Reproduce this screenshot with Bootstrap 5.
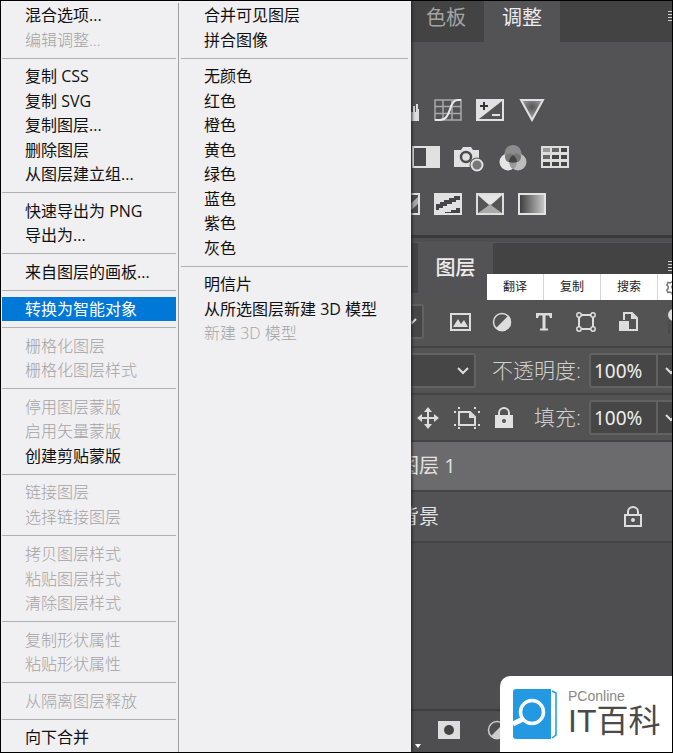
<!DOCTYPE html>
<html lang="zh-CN">
<head>
<meta charset="utf-8">
<meta name="viewport" content="width=device-width, initial-scale=1">
<title>图层</title>
<link href="https://cdn.jsdelivr.net/npm/bootstrap@5.3.0/dist/css/bootstrap.min.css" rel="stylesheet">
<style>
body{font-family:"Open Sans","Noto Sans CJK SC",sans-serif;background:#4e4e50;color:#e2e2e2}
.frame{min-height:100vh;border:1px solid #000}
svg{display:block;flex:none}
/* context menu */
.ctx{top:0;left:0;bottom:0;width:410px;background:#f0eff1;box-shadow:1px 0 3px #222;padding-top:2px}
.ctx-a{width:178px;border-right:1px solid #a0a0a2;padding:0 2px 0 1px}
.ctx-b{padding:0 3px 0 2px}
.ctx button{display:block;width:100%;height:24px;line-height:24px;padding:0 0 0 23px;border:0;background:none;color:#111;font-size:16px;text-align:left;white-space:nowrap}
.ctx button:nth-of-type(even){height:25px}
.ctx button:disabled{color:#a3a3a5;font-weight:300}
.ctx button.chosen{background:#0078d7;color:#fff}
.ctx hr{margin:6px 0 5px;border-top:1px solid #b0b0b2;opacity:1}
.ctx hr:nth-of-type(4n){margin-bottom:6px}
/* panels */
.tabs{background:#434343;padding-left:395px}
.tabs button{border:0;background:none;color:#a3a3a3;font-size:20px;line-height:24px}
.tabs button.on{background:#535355;color:#ececec}
.tabs-top{height:41px}
.tabs-top button{width:88px;padding:0 0 8px 12px}
.tabs-top button.on{width:76px;padding-left:0}
.tabs-mid{height:51px;padding-left:417px;border-top:1px solid #565658}
.tabs-mid button.on{width:75px;font-weight:500}
.adjust{background:#535355;height:196px;padding-top:56px;border-bottom:3px solid #3a3a3c}
.adj-row{height:24px;margin-bottom:23px;padding-left:389px;gap:14px}
.adj-row.shift{padding-left:411px}
.bar{background:#535353;border-bottom:2px solid #444;padding-left:395px;height:47px}
.bar-filter{height:55px;padding-top:4px}
.icons{gap:18px}
.icons-lock{margin-left:20px;gap:14px}
.combo{background:#464646;border:2px solid #626262;border-radius:3px;height:35px;color:#eee}
.opt{font-size:21px;color:#d0d0d0;font-weight:300}
.num{width:69px;font-family:"Noto Sans",sans-serif;font-size:19px;padding:0 0 0 3px;border-radius:3px 0 0 3px}
.drop{width:32px;margin-left:-2px;margin-right:-16px;padding:0 0 0 6px;border-radius:0}
.layer{height:51px;padding:0 29px 0 398px;font-size:20px;background:#535355;border-bottom:2px solid #444}
.layer.sel{height:50px;background:#6b6b6d}
.foot{height:43px;border-top:2px solid #3e3e40;padding:0 0 4px 436px;background:#4e4e50}
.foot-caret{left:413px;bottom:3px}
/* selection toolbar */
.pop{top:273px;left:486px;right:0;height:26px;background:#fff}
.pop button{width:57px;flex:none;border:0;border-right:1px solid #d5d5d5;background:#fff;color:#222;font-size:12px;padding:0}
/* site mark */
.mark-box{right:0;bottom:0;width:172px;height:76px;background:#fff;border-top-left-radius:10px;padding-left:13px;gap:11px}
.mark-s{font:14px/14px "Liberation Sans",sans-serif;color:#888}
.mark-l{font:400 32px/36px "Liberation Sans","Noto Sans CJK SC",sans-serif;color:#4a4a4a}
</style>
<script src="https://cdn.jsdelivr.net/npm/bootstrap@5.3.0/dist/js/bootstrap.bundle.min.js"></script>
</head>
<body>
<div class="frame position-relative overflow-hidden d-flex flex-column">
  <div class="tabs tabs-top d-flex">
    <button type="button">色板</button><button type="button" class="on">调整</button>
    <svg class="ms-auto mt-2" width="4" height="14" stroke="#ccc"><path d="M0 2.5h4M0 5.5h4M0 8.5h4M0 11.5h4"/></svg>
  </div>
  <div class="adjust">
    <div class="adj-row d-flex">
      <svg width="30" height="24"><path fill="#ddd" d="M2 23V14h2v-4h2v5h2V6h2v8h3V4h2v9h3v-3h1V4h2v10h2V8h2v6h1V6h2v5h1v12z"/></svg>
      <svg width="28" height="24" fill="none"><path d="M1 2h26v20H1zM9 2v20M18 2v20M1 8.500h26M1 15.500h26" stroke="#a9a9a9" stroke-width="1.500"/><path d="M1 22h5c12 0 8-20 18-20h3" stroke="#e8e8e8" stroke-width="2"/></svg>
      <svg width="28" height="24"><path fill="#e1e1e1" d="M0 1h28v22H0z"/><path fill="#535355" d="M26 3v18H3z"/><path d="M4 8h8M8 4v8" stroke="#333" stroke-width="2"/><path d="M16 17h8" stroke="#e1e1e1" stroke-width="2"/></svg>
      <svg width="28" height="24"><defs><radialGradient id="vg" cy=".35"><stop stop-color="#555"/><stop offset="1" stop-color="#999"/></radialGradient></defs><path d="M3 2h22L14 22z" fill="url(#vg)" stroke="#e1e1e1" stroke-width="2"/></svg>
    </div>
    <div class="adj-row shift d-flex">
      <svg width="28" height="24"><path fill="#e1e1e1" d="M0 1h28v22H0z"/><path fill="#4b4b4d" d="M2 3h12v18H2z"/></svg>
      <svg width="31" height="28" class="me-n1"><path fill="#e1e1e1" d="M0 5h7l2-3h8l2 3h6v17H0z"/><circle cx="12" cy="12" r="5" fill="#e1e1e1" stroke="#4c4c4e" stroke-width="2.500"/><circle cx="23" cy="20" r="7.500" fill="#535355"/><circle cx="23" cy="20" r="5.500" fill="#777" stroke="#e1e1e1" stroke-width="2"/></svg>
      <svg width="28" height="26"><circle cx="9" cy="17" r="8.500" fill="#e5e5e5"/><circle cx="19" cy="17" r="8.500" fill="#bdbdbd"/><circle cx="14" cy="8.500" r="8.500" fill="#8c8c8c"/><path fill="#777" d="M6 11c3-3 6-3 8-1-3 2-4 4-4 7-2 0-4-2-4-6zM22 11c-3-3-6-3-8-1 3 2 4 4 4 7 2 0 4-2 4-6z"/><path fill="#999" d="M10 16h8c0 4-2 7-4 8-2-1-4-4-4-8z"/><path fill="#444" d="M14 10c3 2 4 4 4 7-3 1-5 1-8 0 0-3 1-5 4-7z"/></svg>
      <svg width="28" height="24"><path fill="#ddd" d="M0 1h28v22H0z"/><path fill="#999" d="M2 3h7v4H2z"/><path fill="#666" d="M11 3h7v4h-7zM2 10h7v4H2z"/><path fill="#444" d="M20 3h6v4h-6zM11 10h7v4h-7zM20 10h6v4h-6zM2 17h7v4H2zM11 17h7v4h-7zM20 17h6v4h-6z"/></svg>
    </div>
    <div class="adj-row d-flex">
      <svg width="30" height="24"><path fill="#4b4b4d" stroke="#ddd" stroke-width="2" d="M1 2h28v20H1z"/><path d="M10 21L28 5v7L18 21z" fill="#aaa"/></svg>
      <svg width="28" height="24"><path fill="#e1e1e1" d="M0 1h28v22H0z"/><path fill="#454547" d="M2 12h4v-2h4V8h5V6h5V4h6v4h-4v2h-4v2h-5v2H9v2H5v2H2zM11 20h6v-2h5v-2h4v5H11z"/></svg>
      <svg width="28" height="24"><path fill="#777" stroke="#ddd" stroke-width="2" d="M1 2h26v20H1z"/><path fill="#e5e5e5" d="M2 3h24L14 14z"/><path fill="#aaa" d="M2 21l12-9 12 9z"/><path fill="#555" d="M2 4l11 9L2 21zM26 4l-11 9 11 8z"/></svg>
      <svg width="28" height="24"><defs><linearGradient id="gg"><stop stop-color="#3a3a3a"/><stop offset="1" stop-color="#ccc"/></linearGradient></defs><path fill="url(#gg)" stroke="#e1e1e1" stroke-width="2" d="M1 2h26v20H1z"/></svg>
    </div>
  </div>
  <div class="tabs tabs-mid d-flex mt-1">
    <button type="button" class="on">图层</button>
    <svg class="ms-auto mt-3" width="4" height="14" stroke="#ccc"><path d="M0 2.500h4M0 5.500h4M0 8.500h4M0 11.500h4"/></svg>
  </div>
  <div class="bar bar-filter d-flex align-items-center">
    <button type="button" class="combo p-0 me-4" aria-label="过滤类型"><svg class="ms-2" width="16" height="10" fill="none" stroke="#ddd" stroke-width="2"><path d="M2 2l4 4 4-4"/></svg></button>
    <div class="icons d-flex align-items-center">
      <svg width="24" height="24"><path d="M3 4h19v16H3z" fill="none" stroke="#ddd" stroke-width="2"/><path fill="#ddd" d="M5 17l5-8 3 5 3-4 4 7z"/></svg>
      <svg width="24" height="24"><circle cx="12" cy="12" r="8.500" fill="none" stroke="#ddd" stroke-width="1.500"/><path fill="#ddd" d="M18.500 5.500A9 9 0 0 1 5.500 18.500z"/></svg>
      <svg width="24" height="24"><path fill="#ddd" d="M4 3h16v5h-2l-1-2.500h-3.500v13H16v2H8v-2h2.500v-13H7L6 8H4z"/></svg>
      <svg width="24" height="24" fill="none" stroke="#ddd" stroke-width="1.500"><path d="M5 6v12M19 6v12M6 5h12M6 19h12" stroke-width="2"/><g fill="#535353"><circle cx="5" cy="5" r="2.200"/><circle cx="19" cy="5" r="2.200"/><circle cx="5" cy="19" r="2.200"/><circle cx="19" cy="19" r="2.200"/></g></svg>
      <svg width="24" height="24"><path d="M8 10V3h8l5 5v12h-8" fill="none" stroke="#ddd" stroke-width="2"/><path fill="#ddd" d="M3 11h10v10H3zM15 3v6h6z"/></svg>
    </div>
    <svg class="ms-auto" width="4" height="32"><circle cx="6" cy="9" r="6" fill="#ddd"/><path d="M1 14v14" stroke="#444"/></svg>
  </div>
  <div class="bar d-flex align-items-center overflow-hidden">
    <button type="button" class="combo p-0 flex-grow-1 d-flex align-items-center justify-content-end" aria-label="混合模式"><svg class="me-1" width="14" height="10" fill="none" stroke="#ddd" stroke-width="2"><path d="M2 2l5 5 5-5"/></svg></button>
    <label class="opt text-nowrap ms-3 me-2" for="op">不透明度:</label>
    <input id="op" class="combo num" value="100%">
    <button type="button" class="combo drop" aria-label="不透明度滑块"><svg width="14" height="10" fill="none" stroke="#ddd" stroke-width="2"><path d="M2 2l5 5 5-5"/></svg></button>
  </div>
  <div class="bar d-flex align-items-center overflow-hidden">
    <div class="icons-lock d-flex align-items-center me-auto">
      <svg width="24" height="24"><path d="M12 3v18M3 12h18" stroke="#ddd" stroke-width="2"/><path d="M12 1l4 5H8zM12 23l4-5H8zM1 12l5-4v8zM23 12l-5-4v8z" fill="#ddd"/></svg>
      <svg width="26" height="24"><path d="M5 6h11l5 5v8H5z" fill="none" stroke="#ddd" stroke-width="2"/><path fill="#ddd" d="M15 6v6h6zM4 1h2v2H4zM20 1h2v2h-2zM4 21h2v2H4zM20 21h2v2h-2zM0 5h2v2H0zM0 18h2v2H0zM24 5h2v2h-2zM24 18h2v2h-2z"/></svg>
      <svg width="20" height="24"><path d="M5 11V7a5 5 0 0 1 10 0v4" fill="none" stroke="#ddd" stroke-width="2"/><path fill="#e1e1e1" d="M1 9h18v13H1z"/><circle cx="10" cy="15" r="2" fill="#555"/></svg>
    </div>
    <label class="opt text-nowrap me-2" for="fi">填充:</label>
    <input id="fi" class="combo num" value="100%">
    <button type="button" class="combo drop" aria-label="填充滑块"><svg width="14" height="10" fill="none" stroke="#ddd" stroke-width="2"><path d="M2 2l5 5 5-5"/></svg></button>
  </div>
  <div class="layer sel d-flex align-items-center">图层 1</div>
  <div class="layer d-flex align-items-center justify-content-between">背景
    <svg width="20" height="24"><path d="M5 9V7a5 5 0 0 1 10 0v2M2 10h16v11H2z" fill="none" stroke="#ddd" stroke-width="2"/><circle cx="10" cy="15" r="2" fill="#ddd"/></svg>
  </div>
  <div class="foot d-flex align-items-center mt-auto">
    <svg width="24" height="24"><path fill="#ddd" d="M1 3h22v18H1z"/><circle cx="12" cy="12" r="5" fill="#444"/></svg>
    <svg class="ms-4" width="24" height="24"><circle cx="12" cy="12" r="8.500" fill="none" stroke="#ccc" stroke-width="1.500"/><path fill="#ccc" d="M18.500 5.500A9 9 0 0 1 5.500 18.500z"/></svg>
  </div>
  <svg class="foot-caret position-absolute" width="8" height="5"><path d="M1 0h6L4 4z" fill="#fff"/></svg>

  <div class="pop position-absolute d-flex overflow-hidden">
    <button type="button">翻译</button><button type="button">复制</button><button type="button">搜索</button>
    <svg class="align-self-center ms-2" width="16" height="16" fill="none" stroke="#777"><circle cx="8" cy="8" r="2.500"/><path stroke-width="1.500" d="M6.500 2h3l.5 2 2 1 2-.5 1.500 2.500-1.500 1.500v1l1.500 1.500-1.500 2.500-2-.5-2 1-.5 2h-3L6 14l-2-1-2 .5L.8 11l1.500-1.500v-2L.8 6 2 3.500l2 .5 2-1z"/></svg>
  </div>

  <div class="mark-box position-absolute d-flex align-items-center">
    <svg width="44" height="52"><path fill="#2499e3" d="M3 1h35v50H3a3 3 0 0 1-3-3V4a3 3 0 0 1 3-3z"/><path d="M39 3l4 2v42l-4 3" fill="none" stroke="#2499e3" stroke-width="1.500"/><path d="M0 36l10-5" stroke="#fff" stroke-width="5"/><circle cx="19" cy="24" r="11.500" fill="#2499e3" stroke="#fff" stroke-width="3.500"/></svg>
    <div><div class="mark-s">PConline</div><div class="mark-l text-nowrap">IT百科</div></div>
  </div>

  <div class="ctx position-absolute d-flex">
    <div class="ctx-a flex-shrink-0">
      <button type="button">混合选项...</button><button type="button" disabled>编辑调整...</button>
      <hr>
      <button type="button">复制 CSS</button><button type="button">复制 SVG</button><button type="button">复制图层...</button><button type="button">删除图层</button><button type="button">从图层建立组...</button>
      <hr>
      <button type="button">快速导出为 PNG</button><button type="button">导出为...</button>
      <hr>
      <button type="button">来自图层的画板...</button>
      <hr>
      <button type="button" class="chosen">转换为智能对象</button>
      <hr>
      <button type="button" disabled>栅格化图层</button><button type="button" disabled>栅格化图层样式</button>
      <hr>
      <button type="button" disabled>停用图层蒙版</button><button type="button" disabled>启用矢量蒙版</button><button type="button">创建剪贴蒙版</button>
      <hr>
      <button type="button" disabled>链接图层</button><button type="button" disabled>选择链接图层</button>
      <hr>
      <button type="button" disabled>拷贝图层样式</button><button type="button" disabled>粘贴图层样式</button><button type="button" disabled>清除图层样式</button>
      <hr>
      <button type="button" disabled>复制形状属性</button><button type="button" disabled>粘贴形状属性</button>
      <hr>
      <button type="button" disabled>从隔离图层释放</button>
      <hr>
      <button type="button">向下合并</button>
    </div>
    <div class="ctx-b flex-grow-1">
      <button type="button">合并可见图层</button><button type="button">拼合图像</button>
      <hr>
      <button type="button">无颜色</button><button type="button">红色</button><button type="button">橙色</button><button type="button">黄色</button><button type="button">绿色</button><button type="button">蓝色</button><button type="button">紫色</button><button type="button">灰色</button>
      <hr>
      <button type="button">明信片</button><button type="button">从所选图层新建 3D 模型</button><button type="button" disabled>新建 3D 模型</button>
    </div>
  </div>
</div>
</body>
</html>
